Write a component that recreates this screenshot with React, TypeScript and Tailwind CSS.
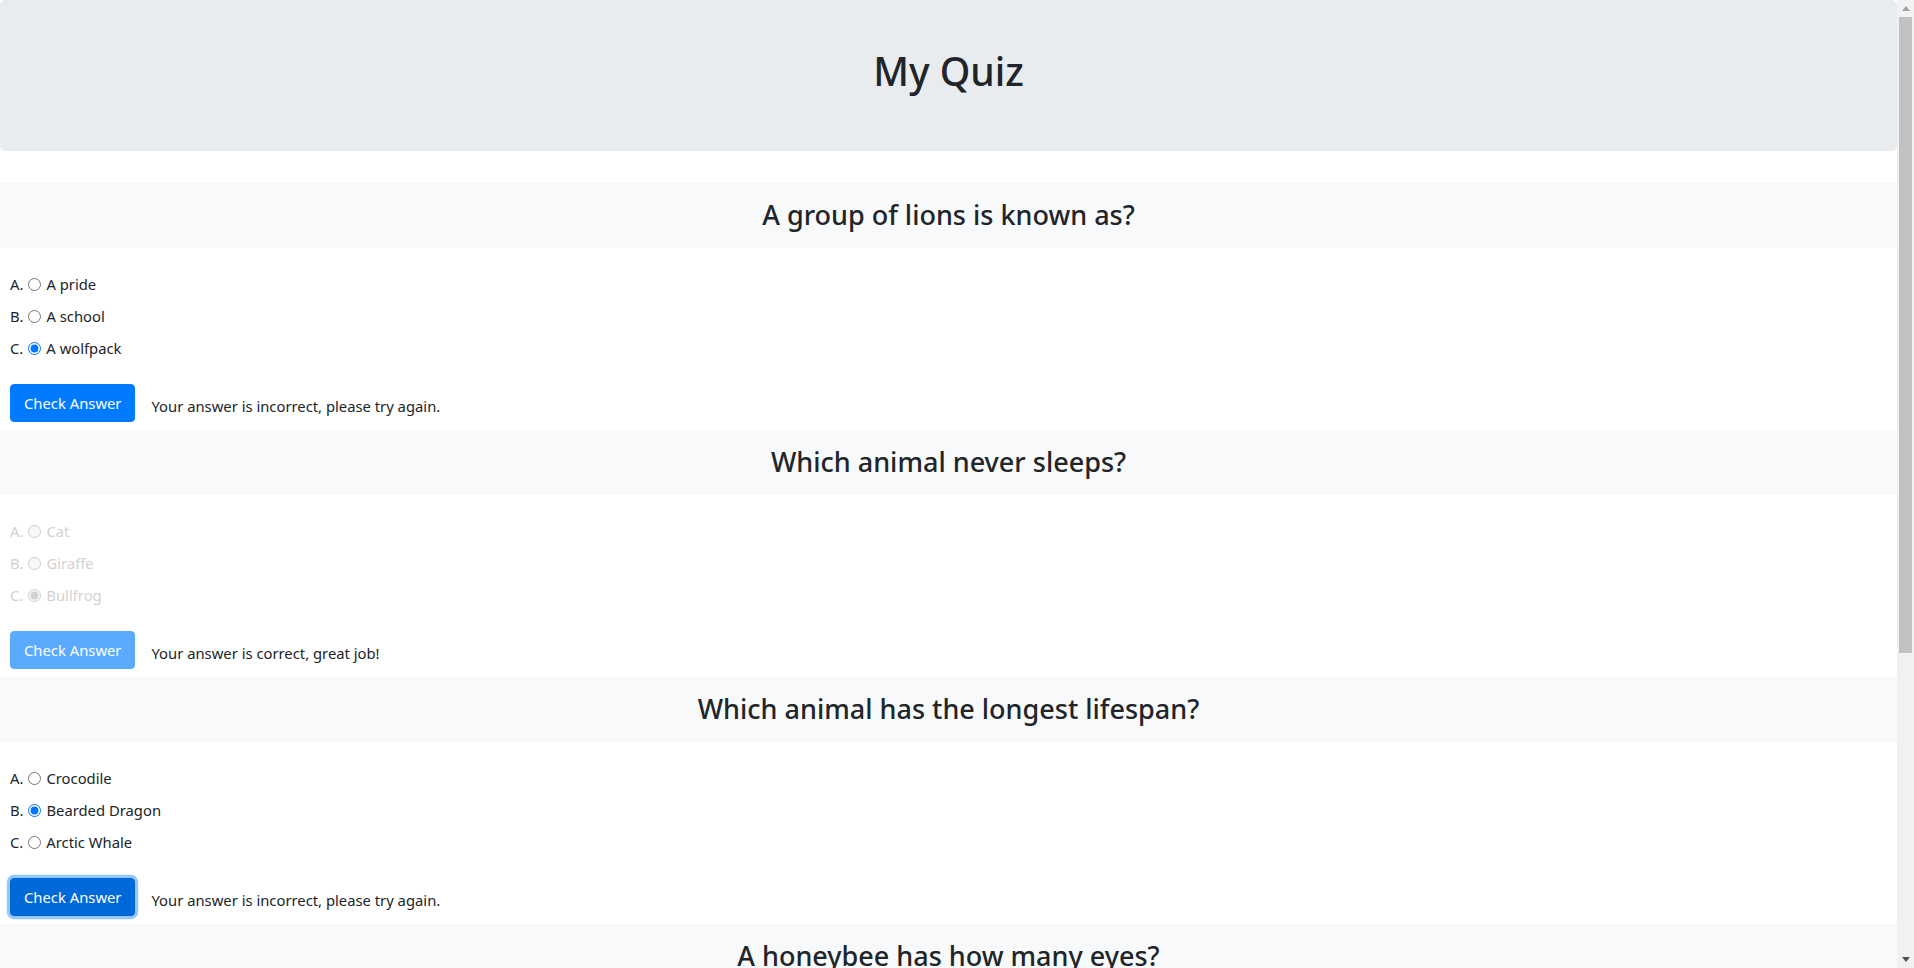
const questions = [
  {
    title: "A group of lions is known as?",
    options: ["A pride", "A school", "A wolfpack"],
    picked: 2,
    done: false,
    focused: false,
    result: "Your answer is incorrect, please try again.",
  },
  {
    title: "Which animal never sleeps?",
    options: ["Cat", "Giraffe", "Bullfrog"],
    picked: 2,
    done: true,
    focused: false,
    result: "Your answer is correct, great job!",
  },
  {
    title: "Which animal has the longest lifespan?",
    options: ["Crocodile", "Bearded Dragon", "Arctic Whale"],
    picked: 1,
    done: false,
    focused: true,
    result: "Your answer is incorrect, please try again.",
  },
  {
    title: "A honeybee has how many eyes?",
    options: ["2", "3", "5"],
    picked: -1,
    done: false,
    focused: false,
    result: "",
  },
  {
    title: "Which bird can fly backwards?",
    options: ["Hummingbird", "Eagle", "Sparrow"],
    picked: -1,
    done: false,
    focused: false,
    result: "",
  },
];

const letters = ["A.", "B.", "C."];

type Q = (typeof questions)[number];

function Question({ q, index }: { q: Q; index: number }) {
  return (
    <div className="mb-2">
      <div className="h-[65px] bg-[#f8f9fa] flex items-center justify-center">
        <h3 className="text-[27px] leading-[1.2] font-medium">{q.title}</h3>
      </div>
      <div className="px-[10px] pt-5">
        {q.options.map((opt, i) => (
          <label
            key={opt}
            className={`h-8 flex items-center ${q.done ? "text-[#d2d2d2]" : ""}`}
          >
            <span>{letters[i]}</span>
            <input
              type="radio"
              name={`q${index}`}
              defaultChecked={q.picked === i}
              disabled={q.done}
              className="ml-[5px] mr-[5px] w-[13px] h-[13px]"
            />
            <span>{opt}</span>
          </label>
        ))}
        <div className="mt-5 flex items-center h-[38px]">
          <button
            className={`h-[38px] px-[13px] rounded text-white border ${
              q.done
                ? "bg-[#5aaaff] border-[#5aaaff]"
                : q.focused
                ? "bg-[#0069d9] border-[#0062cc] shadow-[0_0_0_3.2px_rgba(38,143,255,0.5)]"
                : "bg-[#007bff] border-[#007bff]"
            }`}
          >
            Check Answer
          </button>
          <span className="ml-4 pt-[6px]">{q.result}</span>
        </div>
      </div>
    </div>
  );
}

function Scrollbar() {
  return (
    <div className="fixed top-0 right-0 h-screen w-[17px] bg-[#f1f1f1] flex flex-col items-center">
      <div className="h-[17px] flex items-center justify-center">
        <svg width="8" height="5" viewBox="0 0 8 5">
          <path d="M0 5 L4 0 L8 5 Z" fill="#a3a3a3" />
        </svg>
      </div>
      <div className="w-[13px] h-[636px] bg-[#c1c1c1]" />
      <div className="flex-1" />
      <div className="h-[17px] flex items-center justify-center">
        <svg width="8" height="5" viewBox="0 0 8 5">
          <path d="M0 0 L8 0 L4 5 Z" fill="#505050" />
        </svg>
      </div>
    </div>
  );
}

export default function App() {
  return (
    <div className="min-h-screen bg-white text-[#212529] text-[14.8px] font-['Noto_Sans',sans-serif]">
      <div className="mr-[17px]">
        <div className="h-[151px] bg-[#e9ecef] rounded-[5px] flex items-center justify-center mb-8 pb-2">
          <h1 className="text-[39px] leading-[1.2] font-medium">My Quiz</h1>
        </div>
        {questions.map((q, i) => (
          <Question key={q.title} q={q} index={i} />
        ))}
      </div>
      <Scrollbar />
    </div>
  );
}
